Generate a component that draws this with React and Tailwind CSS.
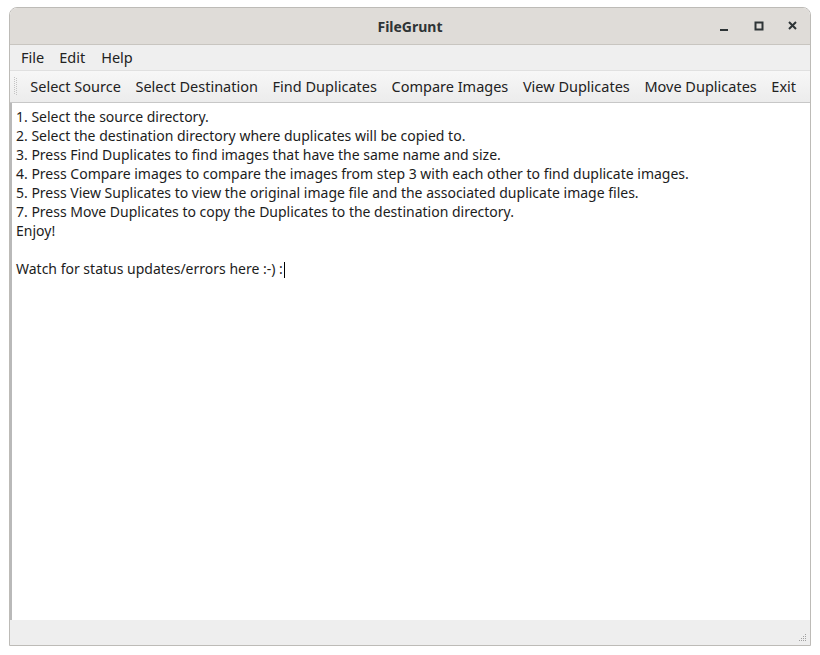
export default function App() {
  const tools = [
    "Select Source",
    "Select Destination",
    "Find Duplicates",
    "Compare Images",
    "View Duplicates",
    "Move Duplicates",
    "Exit",
  ];
  const lines = [
    "1. Select the source directory.",
    "2. Select the destination directory where duplicates will be copied to.",
    "3. Press Find Duplicates to find images that have the same name and size.",
    "4. Press Compare images to compare the images from step 3 with each other to find duplicate images.",
    "5. Press View Suplicates to view the original image file and the associated duplicate image files.",
    "7. Press Move Duplicates to copy the Duplicates to the destination directory.",
    "Enjoy!",
  ];

  const grip = [];
  for (let r = 0; r < 9; r++) {
    grip.push([0, r * 2]);
    grip.push([2, r * 2 + 1]);
  }

  return (
    <div className="w-[820px] h-[655px] bg-white pt-[7px] pl-[9px] font-['Noto_Sans',sans-serif] text-[#2e3436]">
      <div className="w-[802px] h-[639px] flex flex-col rounded-t-[8px] border border-[#bdbbb7] overflow-hidden">
        {/* title bar */}
        <div className="h-[37px] bg-[#dfdcd8] border-b border-[#c8c5c0] flex items-center relative">
          <div className="flex-1 text-center text-[14px] font-bold text-[#2e3436]">FileGrunt</div>
          <div className="absolute right-[10px] top-0 h-full flex items-center gap-[20px] text-[#2e3436]">
            <svg width="14" height="14" viewBox="0 0 14 14">
              <rect x="2" y="10" width="8" height="2" fill="#2e3436" />
            </svg>
            <svg width="14" height="14" viewBox="0 0 14 14">
              <rect x="3.5" y="3.5" width="7" height="7" fill="none" stroke="#2e3436" strokeWidth="2" />
            </svg>
            <svg width="14" height="14" viewBox="0 0 14 14">
              <path d="M3 3 L10 10 M10 3 L3 10" stroke="#2e3436" strokeWidth="2" />
            </svg>
          </div>
        </div>

        {/* menu bar */}
        <div className="h-[25px] bg-[#efefef] flex items-center pl-[11px] text-[14.5px] text-[#222]">
          <span className="mr-[15px]">File</span>
          <span className="mr-[16px]">Edit</span>
          <span>Help</span>
        </div>

        {/* toolbar */}
        <div className="h-[33px] bg-gradient-to-b from-[#f7f7f7] to-[#ececec] border-t border-[#e0e0e0] border-b border-b-[#c7c7c7] flex items-center pl-[4px] text-[14.5px] text-[#222]">
          <svg width="4" height="19" viewBox="0 0 4 19" className="mr-[5px]">
            {grip.map(([x, y]) => (
              <rect key={x + "-" + y} x={x} y={y} width="1" height="1" fill="#c4c4c4" />
            ))}
          </svg>
          {tools.map((t) => (
            <span key={t} className="px-[7.3px]">
              {t}
            </span>
          ))}
        </div>

        {/* text area */}
        <div className="flex-1 bg-white border-l-[2px] border-[#b9b9b9] pl-[4px] pt-[4px] text-[14px] leading-[19px] text-[#1c1c1c]">
          {lines.map((l) => (
            <div key={l}>{l}</div>
          ))}
          <div className="h-[19px]" />
          <div>
            Watch for status updates/errors here :-) :
            <span className="inline-block w-[1px] h-[16px] bg-black align-middle ml-[1px]" />
          </div>
        </div>

        {/* status bar */}
        <div className="h-[25px] bg-[#eeeeee] flex items-end justify-end pr-[3px] pb-[3px]">
          <svg width="10" height="10" viewBox="0 0 10 10">
            {[
              [8, 0],
              [6, 2],
              [8, 2],
              [4, 4],
              [6, 4],
              [8, 4],
              [2, 6],
              [4, 6],
              [6, 6],
              [8, 6],
            ].map(([x, y]) => (
              <rect key={x + "-" + y} x={x} y={y + 2} width="1" height="1" fill="#a0a0a0" />
            ))}
          </svg>
        </div>
      </div>
    </div>
  );
}
